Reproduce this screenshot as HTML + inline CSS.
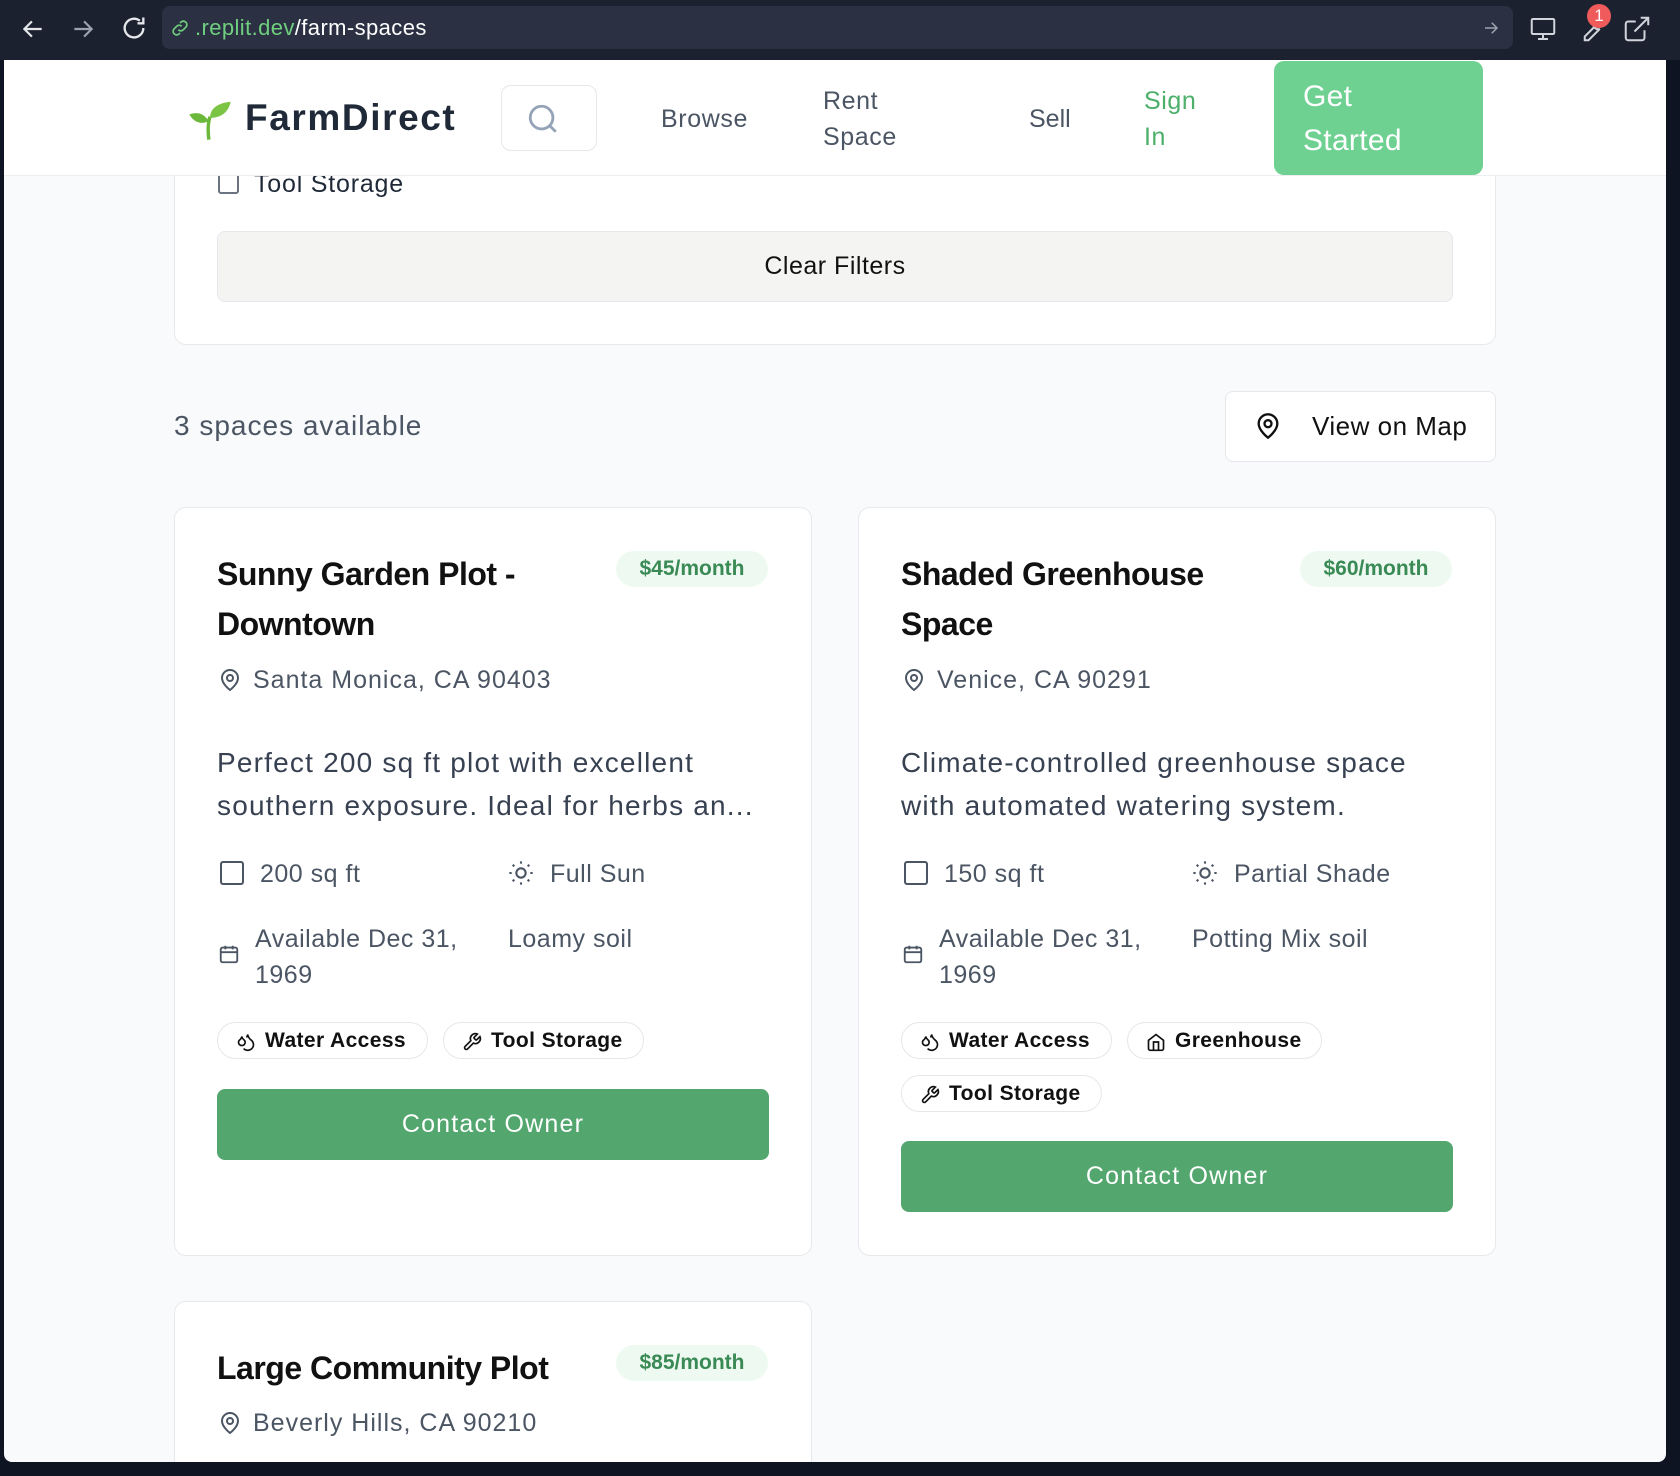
<!DOCTYPE html>
<html><head><meta charset="utf-8"><style>
*{box-sizing:border-box;margin:0;padding:0}
html,body{width:1680px;height:1476px;overflow:hidden}
body{background:#0f1422;font-family:"Liberation Sans",sans-serif;position:relative}
.a{position:absolute}
#top{left:0;top:0;width:1680px;height:60px;background:#1c2130}
#url{left:162px;top:6px;width:1351px;height:43px;background:#2b3142;border-radius:8px}
#page{left:4px;top:60px;width:1662px;height:1402px;background:#f8fafc;overflow:hidden;border-radius:0 0 8px 8px}
#hdr{left:0;top:0;width:1662px;height:116px;background:#fff;border-bottom:1px solid #eceef1;z-index:5}
.card{background:#fff;border:1px solid #e7e9ec;border-radius:12px}
.t{white-space:nowrap}
.title{font-size:32px;font-weight:bold;color:#111;line-height:50px;letter-spacing:-0.5px}
.price{background:#eefaf1;color:#3a8a55;font-size:21px;font-weight:bold;border-radius:18px;height:36px;line-height:36px;text-align:center}
.loc{font-size:25px;color:#4b5563;letter-spacing:1px}
.desc{font-size:28px;color:#374151;line-height:43px;letter-spacing:1.2px;white-space:nowrap}
.spec{font-size:25px;color:#4b5563;line-height:36px;letter-spacing:0.5px}
.tag{height:37px;border:1px solid #e5e7eb;border-radius:19px;font-size:21px;font-weight:bold;color:#111;line-height:35px;padding-left:47px;letter-spacing:0.4px}
.tag svg{position:absolute;left:18px;top:9px}
.btn{background:#52a66e;border-radius:8px;color:#fff;font-size:25px;text-align:center;height:71px;line-height:71px;letter-spacing:1.2px}
</style></head><body>
<div id="top" class="a">
<svg class="a" style="left:20px;top:16px" width="26" height="26" viewBox="0 0 24 24" fill="none" stroke="#e5e7eb" stroke-width="2"><path d="M20 12H5M11 5l-7 7 7 7"/></svg>
<svg class="a" style="left:70px;top:16px" width="26" height="26" viewBox="0 0 24 24" fill="none" stroke="#9ca3af" stroke-width="2"><path d="M4 12h15M13 5l7 7-7 7"/></svg>
<svg class="a" style="left:120px;top:14px" width="28" height="28" viewBox="0 0 24 24" fill="none" stroke="#e5e7eb" stroke-width="2"><path d="M20 12a8 8 0 1 1-3-6.2M20 3v5h-5"/></svg>
<div id="url" class="a">
<svg class="a" style="left:8px;top:12px" width="20" height="20" viewBox="0 0 24 24" fill="none" stroke="#6fcf7f" stroke-width="2"><path d="M10 14a4 4 0 0 0 6 0l3-3a4 4 0 0 0-6-6l-1 1M14 10a4 4 0 0 0-6 0l-3 3a4 4 0 0 0 6 6l1-1"/></svg>
<div class="a t" style="left:33px;top:9px;font-size:22px;color:#fff;letter-spacing:0.4px"><span style="color:#6fcf7f">.replit.dev</span>/farm-spaces</div>
<svg class="a" style="left:1320px;top:13px" width="18" height="18" viewBox="0 0 24 24" fill="none" stroke="#9ca3af" stroke-width="2"><path d="M4 12h15M13 5l7 7-7 7"/></svg>
</div>
<svg class="a" style="left:1528px;top:14px" width="30" height="30" viewBox="0 0 24 24" fill="none" stroke="#d1d5db" stroke-width="1.6"><rect x="3" y="4" width="18" height="12" rx="1"/><path d="M12 16v4M8 20h8"/></svg>
<svg class="a" style="left:1576px;top:14px" width="30" height="30" viewBox="0 0 24 24" fill="none" stroke="#d1d5db" stroke-width="1.6"><path d="M14 7a4 4 0 0 0 5 5L10 21l-3 0 0-3 9-9"/></svg>
<div class="a" style="left:1587px;top:4px;width:24px;height:24px;border-radius:12px;background:#ef5a5a;color:#fff;font-size:17px;text-align:center;line-height:24px">1</div>
<svg class="a" style="left:1622px;top:14px" width="30" height="30" viewBox="0 0 24 24" fill="none" stroke="#d1d5db" stroke-width="1.6"><path d="M18 13v6a2 2 0 0 1-2 2H5a2 2 0 0 1-2-2V8a2 2 0 0 1 2-2h6M15 3h6v6M10 14L21 3"/></svg>
</div>
<div id="page" class="a">
<div id="hdr" class="a">
<svg class="a" style="left:183px;top:36px" width="46" height="46" viewBox="0 0 40 40"><path d="M19 38 C18 30 18 24 20 18" stroke="#6cb83a" stroke-width="3" fill="none"/><path d="M20 19 C20 10 28 6 38 5 C36 14 30 19 20 19Z" fill="#7cc443"/><path d="M19 22 C14 14 8 14 2 16 C6 23 12 25 19 22Z" fill="#6cb83a"/></svg>
<div class="a t" style="left:241px;top:30px;font-size:37px;font-weight:bold;color:#1f2937;line-height:56px;letter-spacing:1.6px">FarmDirect</div>
<div class="a" style="left:497px;top:25px;width:96px;height:66px;border:1px solid #e5e7eb;border-radius:10px"></div>
<svg class="a" style="left:522px;top:42px" width="34" height="34" viewBox="0 0 24 24" fill="none" stroke="#94a3b8" stroke-width="2"><circle cx="11" cy="11" r="8"/><path d="M21 21l-4.3-4.3"/></svg>
<div class="a t" style="left:657px;top:42px;font-size:25px;color:#4b5563;line-height:34px;letter-spacing:0.6px">Browse</div>
<div class="a" style="left:819px;top:23px;font-size:25px;color:#4b5563;line-height:36px;letter-spacing:0.6px">Rent<br>Space</div>
<div class="a t" style="left:1025px;top:42px;font-size:25px;color:#4b5563;line-height:34px">Sell</div>
<div class="a" style="left:1140px;top:23px;font-size:25px;color:#4caf6a;line-height:36px;letter-spacing:0.6px">Sign<br>In</div>
<div class="a" style="left:1270px;top:1px;width:209px;height:114px;background:#6fd191;border-radius:10px"></div>
<div class="a" style="left:1299px;top:15px;font-size:30px;color:#fff;line-height:44px;letter-spacing:0.3px">Get<br>Started</div>
</div>
<div class="a card" style="left:170px;top:-20px;width:1322px;height:305px"></div>
<div class="a" style="left:214px;top:113px;width:21px;height:21px;border:2px solid #6b7280;border-radius:3px"></div>
<div class="a t" style="left:250px;top:110px;font-size:25px;color:#1f2937;letter-spacing:0.8px">Tool Storage</div>
<div class="a" style="left:213px;top:171px;width:1236px;height:71px;background:#f4f4f3;border:1px solid #e5e7eb;border-radius:8px;text-align:center;line-height:69px;font-size:25px;color:#111;letter-spacing:0.5px">Clear Filters</div>
<div class="a t" style="left:170px;top:350px;font-size:28px;color:#4b5563;letter-spacing:1px">3 spaces available</div>
<div class="a" style="left:1221px;top:331px;width:271px;height:71px;background:#fff;border:1px solid #e5e7eb;border-radius:8px"></div>
<svg class="a" style="left:1250px;top:351px" width="28" height="30" viewBox="0 0 24 24" fill="none" stroke="#111" stroke-width="2"><path d="M20 10c0 6-8 12-8 12s-8-6-8-12a8 8 0 0 1 16 0Z"/><circle cx="12" cy="10" r="3"/></svg>
<div class="a t" style="left:1308px;top:351px;font-size:26px;color:#111;letter-spacing:0.5px">View on Map</div>

<!-- card 1 -->
<div class="a card" style="left:170px;top:447px;width:638px;height:749px"></div>
<div class="a title" style="left:213px;top:489px;width:370px">Sunny Garden Plot -<br>Downtown</div>
<div class="a price" style="left:612px;top:491px;width:152px">$45/month</div>
<svg class="a" style="left:214px;top:606px" width="24" height="28" viewBox="0 0 24 24" fill="none" stroke="#4b5563" stroke-width="2"><path d="M20 10c0 6-8 12-8 12s-8-6-8-12a8 8 0 0 1 16 0Z"/><circle cx="12" cy="10" r="3"/></svg>
<div class="a t loc" style="left:249px;top:606px">Santa Monica, CA 90403</div>
<div class="a desc" style="left:213px;top:681px">Perfect 200 sq ft plot with excellent<br>southern exposure. Ideal for herbs an...</div>
<div class="a" style="left:216px;top:801px;width:24px;height:24px;border:2px solid #4b5563;border-radius:3px"></div>
<div class="a t spec" style="left:256px;top:796px">200 sq ft</div>
<svg class="a" style="left:503px;top:799px" width="28" height="28" viewBox="0 0 24 24" fill="none" stroke="#4b5563" stroke-width="1.8"><circle cx="12" cy="12" r="4"/><path d="M12 2v2M12 20v2M4.9 4.9l1.4 1.4M17.7 17.7l1.4 1.4M2 12h2M20 12h2M6.3 17.7l-1.4 1.4M19.1 4.9l-1.4 1.4"/></svg>
<div class="a t spec" style="left:546px;top:796px">Full Sun</div>
<svg class="a" style="left:214px;top:882px" width="22" height="24" viewBox="0 0 24 24" fill="none" stroke="#4b5563" stroke-width="2"><rect x="3" y="5" width="18" height="16" rx="2"/><path d="M3 10h18M8 3v4M16 3v4"/></svg>
<div class="a spec" style="left:251px;top:861px">Available Dec 31,<br>1969</div>
<div class="a t spec" style="left:504px;top:861px">Loamy soil</div>
<div class="a tag" style="left:213px;top:962px;width:211px"><svg width="20" height="20" viewBox="0 0 24 24" fill="none" stroke="#111" stroke-width="2"><path d="M7 16.3c2.2 0 4-1.8 4-4 0-1.2-.6-2.2-1.7-3.1S7.3 7 7 5.5c-.3 1.5-1.2 3-2.3 3.8S3 11.1 3 12.3c0 2.2 1.8 4 4 4zM12.6 6.6A11 11 0 0 0 14 3c.5 2.5 2 4.9 4 6.5s3 3.5 3 5.5a7 7 0 0 1-11.9 4.9"/></svg>Water Access</div>
<div class="a tag" style="left:439px;top:962px;width:201px"><svg width="20" height="20" viewBox="0 0 24 24" fill="none" stroke="#111" stroke-width="2"><path d="M14.7 6.3a1 1 0 0 0 0 1.4l1.6 1.6a1 1 0 0 0 1.4 0l3.8-3.8a6 6 0 0 1-7.9 7.9l-6.9 6.9a2.1 2.1 0 0 1-3-3l6.9-6.9a6 6 0 0 1 7.9-7.9z"/></svg>Tool Storage</div>
<div class="a btn" style="left:213px;top:1029px;width:552px">Contact Owner</div>

<!-- card 2 -->
<div class="a card" style="left:854px;top:447px;width:638px;height:749px"></div>
<div class="a title" style="left:897px;top:489px;width:370px">Shaded Greenhouse<br>Space</div>
<div class="a price" style="left:1296px;top:491px;width:152px">$60/month</div>
<svg class="a" style="left:898px;top:606px" width="24" height="28" viewBox="0 0 24 24" fill="none" stroke="#4b5563" stroke-width="2"><path d="M20 10c0 6-8 12-8 12s-8-6-8-12a8 8 0 0 1 16 0Z"/><circle cx="12" cy="10" r="3"/></svg>
<div class="a t loc" style="left:933px;top:606px">Venice, CA 90291</div>
<div class="a desc" style="left:897px;top:681px">Climate-controlled greenhouse space<br>with automated watering system.</div>
<div class="a" style="left:900px;top:801px;width:24px;height:24px;border:2px solid #4b5563;border-radius:3px"></div>
<div class="a t spec" style="left:940px;top:796px">150 sq ft</div>
<svg class="a" style="left:1187px;top:799px" width="28" height="28" viewBox="0 0 24 24" fill="none" stroke="#4b5563" stroke-width="1.8"><circle cx="12" cy="12" r="4"/><path d="M12 2v2M12 20v2M4.9 4.9l1.4 1.4M17.7 17.7l1.4 1.4M2 12h2M20 12h2M6.3 17.7l-1.4 1.4M19.1 4.9l-1.4 1.4"/></svg>
<div class="a t spec" style="left:1230px;top:796px">Partial Shade</div>
<svg class="a" style="left:898px;top:882px" width="22" height="24" viewBox="0 0 24 24" fill="none" stroke="#4b5563" stroke-width="2"><rect x="3" y="5" width="18" height="16" rx="2"/><path d="M3 10h18M8 3v4M16 3v4"/></svg>
<div class="a spec" style="left:935px;top:861px">Available Dec 31,<br>1969</div>
<div class="a t spec" style="left:1188px;top:861px">Potting Mix soil</div>
<div class="a tag" style="left:897px;top:962px;width:211px"><svg width="20" height="20" viewBox="0 0 24 24" fill="none" stroke="#111" stroke-width="2"><path d="M7 16.3c2.2 0 4-1.8 4-4 0-1.2-.6-2.2-1.7-3.1S7.3 7 7 5.5c-.3 1.5-1.2 3-2.3 3.8S3 11.1 3 12.3c0 2.2 1.8 4 4 4zM12.6 6.6A11 11 0 0 0 14 3c.5 2.5 2 4.9 4 6.5s3 3.5 3 5.5a7 7 0 0 1-11.9 4.9"/></svg>Water Access</div>
<div class="a tag" style="left:1123px;top:962px;width:195px"><svg width="20" height="20" viewBox="0 0 24 24" fill="none" stroke="#111" stroke-width="2"><path d="M3 10l9-7 9 7v10a2 2 0 0 1-2 2H5a2 2 0 0 1-2-2z M9 22V12h6v10"/></svg>Greenhouse</div>
<div class="a tag" style="left:897px;top:1015px;width:201px"><svg width="20" height="20" viewBox="0 0 24 24" fill="none" stroke="#111" stroke-width="2"><path d="M14.7 6.3a1 1 0 0 0 0 1.4l1.6 1.6a1 1 0 0 0 1.4 0l3.8-3.8a6 6 0 0 1-7.9 7.9l-6.9 6.9a2.1 2.1 0 0 1-3-3l6.9-6.9a6 6 0 0 1 7.9-7.9z"/></svg>Tool Storage</div>
<div class="a btn" style="left:897px;top:1081px;width:552px">Contact Owner</div>

<!-- card 3 -->
<div class="a card" style="left:170px;top:1241px;width:638px;height:200px"></div>
<div class="a title t" style="left:213px;top:1283px">Large Community Plot</div>
<div class="a price" style="left:612px;top:1285px;width:152px">$85/month</div>
<svg class="a" style="left:214px;top:1349px" width="24" height="28" viewBox="0 0 24 24" fill="none" stroke="#4b5563" stroke-width="2"><path d="M20 10c0 6-8 12-8 12s-8-6-8-12a8 8 0 0 1 16 0Z"/><circle cx="12" cy="10" r="3"/></svg>
<div class="a t loc" style="left:249px;top:1349px">Beverly Hills, CA 90210</div>
</div>
</body></html>
